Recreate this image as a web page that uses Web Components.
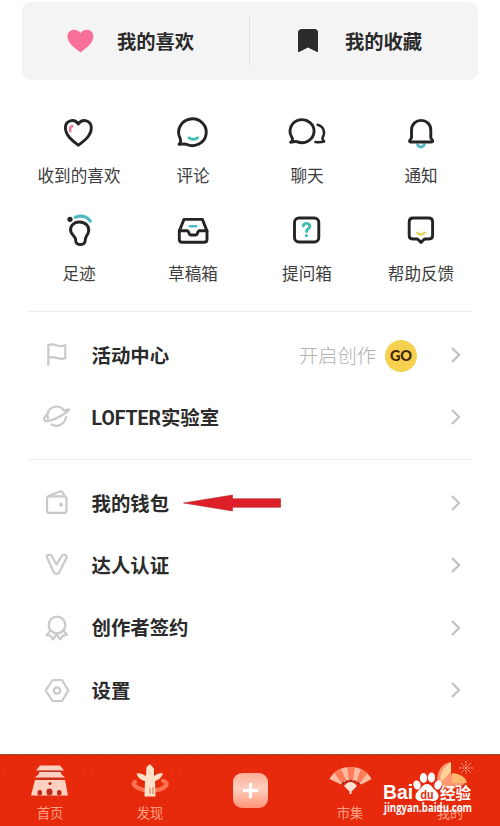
<!DOCTYPE html>
<html lang="zh-CN">
<head>
<meta charset="utf-8">
<title>LOFTER</title>
<style>
body{margin:0;background:#fff;width:500px;height:826px;overflow:hidden}
</style>
</head>
<body>
<profile-page></profile-page>
<script>
// Icon artwork; every entry is [viewBox, markup].
const ICONS = {
  like:['60 21 40 40','<path fill="#f8709a" d="M80.500 52.500C75 48 67.500 43.500 67.500 36.500C67.500 29.500 76 27.500 80.500 33C85 27.500 93.300 29.500 93.300 36.500C93.300 43.500 86 48 80.500 52.500Z"/>'],
  mark:['288 21 40 40','<path fill="#2b2b2b" d="M302 29H314.500Q318 29 318 32.500V51Q318 52.500 316.500 51.700L308 47.600L299.600 51.700Q298 52.500 298 51V33Q298 29 302 29Z"/>'],
  heart:['59 113 40 40','<path class="k" d="M78.300 145.200C73.500 141.500 65.400 136 65.400 127.800C65.400 120.500 74.200 117.800 78.300 124C82.500 117.800 91.300 120.500 91.300 127.800C91.300 136 83.500 141.500 78.300 145.200Z"/><path fill="none" stroke="#ee7d96" stroke-width="2.600" stroke-linecap="round" d="M70.300 131.300Q69.300 127.300 72.400 126"/>'],
  comment:['173 113 40 40','<path class="k" d="M179 144.200C181 142.800 181 140.500 180 138A13.800 13.400 0 1 1 186.500 144.300C184 143.400 181.500 144.600 179 144.200Z"/><path fill="none" stroke="#3fbcb6" stroke-width="2.800" stroke-linecap="round" d="M189 137.800Q193.300 140.700 197.500 137.800"/>'],
  chat:['287 113 40 40','<path class="k" d="M290.500 142.200C293 141 292.800 139 291.600 136.800A12 11.500 0 1 1 297.500 141.800C295 140.800 292.500 142.600 290.500 142.200Z"/><path class="k" style="stroke-width:2.500" d="M317.600 124.800C323.800 126.500 325.500 132.300 322.600 137.700Q322 139.800 324.200 141.500Q320.500 142.500 315.500 142"/>'],
  bell:['401 113 40 40','<path fill="none" stroke="#55b8c9" stroke-width="3" d="M417.500 143.500A3.400 3.400 0 0 0 424.300 143.500"/><path class="k" d="M411.500 138V130.500C411.500 117 430.800 117 430.800 130.500V138L432.600 140.500Q433 142 431 142H411Q409 142 409.700 140.500Z"/>'],
  foot:['59 211 40 40','<circle cx="70" cy="219.300" r="2.600" fill="#242424"/><path fill="none" stroke="#50bac0" stroke-width="3.200" stroke-linecap="round" d="M75.200 217.200Q85 213.700 90.300 221"/><path class="k" d="M79.500 222C86 222 89.600 227 88.600 231.500C87.800 235.500 85 236.500 85.200 240.500C85.400 246 75.300 246 75.700 240.500C75.900 236.500 71.800 235 70.800 231.500C69.500 226.500 73.500 222 79.500 222Z"/>'],
  inbox:['173 211 40 40','<path class="k" d="M184 219.400H202.400L207 231V239.500Q207 242.300 204 242.300H182.300Q179.300 242.300 179.300 239.500V231Z"/><path class="k" d="M179.300 230.700H187.500C189 230.700 188.500 235 191 235H195.500C198 235 197.500 230.700 199 230.700H207"/><path stroke="#55b8d0" stroke-width="2.600" stroke-linecap="round" d="M190 226.300H196"/>'],
  ask:['287 211 40 40','<rect class="k" x="294.500" y="218" width="24.300" height="24" rx="4.500"/><path fill="none" stroke="#3ebbb8" stroke-width="2.900" stroke-linecap="round" stroke-linejoin="round" d="M303.300 225.800C304 222.200 310 222.700 309.700 226.500C309.500 229 306.600 228.700 306.600 231.500"/><circle cx="306.500" cy="235.600" r="1.600" fill="#3ebbb8"/>'],
  help:['401 211 40 40','<path class="k" d="M413 218H428.700Q432.600 218 432.600 222V235.600Q432.600 239 429 239H424.500L421 242.400L417.500 239H412.600Q409.200 239 409.200 235.600V222Q409.200 218 413 218Z"/><path fill="none" stroke="#e5d05f" stroke-width="2.300" stroke-linecap="round" d="M417.300 232.600Q421 236.300 424.800 232.600"/>'],
  flag:['37 335 40 40','<path class="g" d="M48.300 365V345.300C54 341.800 58.500 348.500 65.300 345.300V358C58.500 361.200 54 354.500 48.300 358"/>'],
  planet:['37 397 40 40','<path class="g" d="M48 418.700C44.500 407.500 58 402.500 64.500 410.700M48.500 412.800C43 417.500 42.300 422.300 49.300 420.800C57.500 418.800 67 412.500 69 409.600C67.300 409.300 65.500 409.700 63.500 410.600M51.600 424.500C59.500 428.500 65.700 422 66 417"/>'],
  wallet:['37 482 40 40','<rect class="g" x="47" y="495.300" width="19.500" height="16.600" rx="2.500"/><path class="g" d="M48.500 495L60 490.500Q62 490 63 492L64.500 495"/><circle cx="61" cy="503.700" r="2" fill="#c9c9c9"/>'],
  vip:['37 545 40 40','<path class="g" d="M47 557.500C46 554.500 50.700 554 51.700 556L56.500 564.500L61.700 556C63 554 67.700 554.500 66.400 558L59.500 572C58.200 574.600 54.900 574.600 53.700 572Z"/>'],
  medal:['37 607 40 40','<circle class="g" cx="57" cy="624" r="8.300"/><path class="g" d="M49.800 630L46.700 634.500L50.500 634.500L52.800 638.300L56.500 633.500L60.300 638.300L63 634.500L67 634L64 630"/>'],
  gear:['37 669 40 40','<path class="g" d="M52.600 679H62L68.300 689.500L62 700H52.600L45.600 689.500Z" stroke-linejoin="round"/><circle class="g" cx="57" cy="689.500" r="3.200"/>'],
  gate:['25 761 50 36','<g fill="#ffd0bf"><path d="M40 764.500H60L64 769.500H36Z"/><path d="M39 771H61V773L65 776.500H35L39 773Z"/><path d="M35 779H65L68 794.500H31Z"/></g><path stroke="#b93422" stroke-width="1.200" d="M38 770.400H62M36 777.600H64"/><g fill="#bd2b1b"><rect x="37.500" y="789" width="4.500" height="5.500" rx="2"/><rect x="46.500" y="787.500" width="6" height="7" rx="3"/><rect x="57" y="789" width="4.500" height="5.500" rx="2"/><circle cx="50" cy="782.500" r="1.600"/></g>'],
  pillar:['125 761 50 36','<path fill="none" stroke="#ff7250" stroke-width="4.300" stroke-linecap="round" d="M135 781C130 785 143 790.500 152 789.500C165 788.500 171 782.500 163 780"/><g fill="#ffe0c9"><path d="M144.500 795.500L145 780Q138 778.500 136.500 772.500Q141 771.500 146 775L146.500 766L150 763L154 767.500L154 775Q158 771.500 163 772.500Q161 778.500 155 780L155.500 795.500Z"/></g><path stroke="#e8aa86" stroke-width="2" d="M150 787V793M153 786V793"/>'],
  fan:['325 761 50 36','<path fill="#ffbba0" d="M329.500 778Q336 766 350.500 766Q365 766 371.500 778L361.500 783.500Q350 775 341 783.500Z"/><path fill="#ff7c5a" d="M334 771.500L341 768L346 779L341.500 782ZM347 766H355L353 779H349ZM361 768L367.500 772L360 782L356.500 780Z"/><path fill="#ffe0d4" d="M344 785Q350.500 777 357 785L351.500 790.500V793H349.500V790.500Z"/><path fill="none" stroke="#9c291c" stroke-width="1.700" stroke-dasharray="2.800 1.200" d="M342 783Q350.500 776 359.500 783"/>'],
  mine:['425 758 50 39','<path fill="#ff9672" d="M437 782Q437 763 451 761V773L465 783L450 789Z"/><path fill="#ffd29a" d="M451 761Q438 770 441 781L451 771Z"/><path fill="#ffb86e" d="M452 772Q465 773 467 782H452Z"/><path stroke="#ffb39b" stroke-width="1" stroke-dasharray="2 1" d="M466 760V773M459 767H473M461 762L471 772M471 762L461 772"/>']
};
const FONT = 'Roboto,"Noto Sans CJK SC",sans-serif';
const define = (name, build) => customElements.define(name, class extends HTMLElement {
  connectedCallback(){
    if(this.shadowRoot) return;
    this.attachShadow({mode:'open'}).innerHTML = build(this);
  }
});

define('line-icon', el => {
  const [box, art] = ICONS[el.getAttribute('name')];
  const [, , w, h] = box.split(' ');
  return `<style>:host{display:block;flex:none;width:${w}px;height:${h}px}svg{display:block}
  .k{fill:none;stroke:#242424;stroke-width:2.900;stroke-linejoin:round;stroke-linecap:round}
  .g{fill:none;stroke:#c9c9c9;stroke-width:2.200;stroke-linejoin:round;stroke-linecap:round}</style>
  <svg width="${w}" height="${h}" viewBox="${box}">${art}</svg>`;
});

define('quick-card', () => `<style>:host{display:grid;grid-template-columns:227px 1px 228px;margin:2px 22px 0;height:78px;background:#f4f4f4;border-radius:9px;align-items:center}
  i{height:50px;background:#e2e2e2}</style><slot name="a"></slot><i></i><slot name="b"></slot>`);

define('quick-link', el => `<style>:host{display:flex;align-items:center;padding-left:38px;gap:17px;font:700 19.3px/28px ${FONT};color:#2b2b2b;white-space:nowrap}span{padding-top:4px}</style>
  <line-icon name="${el.getAttribute('icon')}"></line-icon><span><slot></slot></span>`);

define('feature-grid', () => `<style>:host{display:grid;grid-template-columns:repeat(4,114px);grid-auto-rows:98px;margin:33px 22px 0;height:198px}</style><slot></slot>`);

define('feature-item', el => `<style>:host{display:flex;flex-direction:column;align-items:center;gap:12px;font:400 16.600px/24px ${FONT};color:#3d3d3d;white-space:nowrap}</style>
  <line-icon name="${el.getAttribute('icon')}"></line-icon><span><slot></slot></span>`);

define('menu-group', () => `<style>:host{display:block;margin:0 28px;border-top:1px solid #ededed}</style><slot></slot>`);

define('menu-row', el => `<style>:host{display:flex;align-items:center;height:62.300px;padding:0 10px 0 9px;font:700 19.400px/28px ${FONT};color:#2b2b2b;white-space:nowrap}
  .t{margin-left:14.500px;padding-top:3px}.x{margin-left:13.500px}.end{margin-left:auto;display:flex;align-items:center;gap:33px}svg{display:block}</style>
  <line-icon name="${el.getAttribute('icon')}"></line-icon><span class="t"><slot></slot></span><span class="x"><slot name="after"></slot></span>
  <div class="end"><slot name="end"></slot><svg width="12" height="18" viewBox="0 0 12 18"><path d="M2 2L9 9L2 16" fill="none" stroke="#c3c3c3" stroke-width="2.300"/></svg></div>`);

define('create-hint', () => `<style>:host{display:flex;align-items:center;gap:9px;font:300 19.300px/28px ${FONT};color:#b0b0b0}span{padding-top:3px}
  b{width:32px;height:32px;margin-top:2px;border-radius:50%;background:#f6d150;color:#45280b;font:900 14.500px/32px Lato,sans-serif;text-align:center;letter-spacing:-.2px}</style><span><slot></slot></span><b>GO</b>`);

define('red-arrow', () => `<style>:host,svg{display:block}</style><svg width="98" height="18" viewBox="183 494 98 18"><path fill="#dc1f29" stroke="#b82a2f" stroke-width=".6" d="M183.500 503L232.500 495V498.700H280.700V507.300H232.500V511Z"/></svg>`);

define('tab-bar', () => `<style>:host{display:grid;grid-template-columns:repeat(5,100px);position:relative;height:72px;box-sizing:border-box;border-top:1px solid #9b4a27;color:#ffa186;
  background-color:#e62a0b;background-image:radial-gradient(circle,rgba(187,25,0,.28) .9px,transparent 1.300px),radial-gradient(circle,rgba(187,25,0,.28) .9px,transparent 1.300px);background-size:22px 18px;background-position:0 0,11px 9px}</style><slot></slot>`);

define('tab-item', el => `<style>:host{display:flex;flex-direction:column;align-items:center;justify-content:flex-end;height:69px;gap:6px;font:400 13.300px/20px ${FONT}}</style>
  <line-icon name="${el.getAttribute('icon')}"></line-icon><span><slot></slot></span>`);

define('add-button', () => `<style>:host{display:flex;justify-content:center;padding-top:18px}div{width:35px;height:35px;border-radius:9px;background:linear-gradient(#ffaf96,#ffcebf 45%,#ff9478);display:grid;place-items:center}</style>
  <div><svg width="17" height="17"><path d="M8.500 1V16M1 8.500H16" stroke="#fff" stroke-width="3.200"/></svg></div>`);

// Source badge lying over the last two tabs.
define('site-badge', () => `<style>:host{position:absolute;left:380px;top:15px;width:96px;height:54px}svg{display:block;overflow:visible}text{fill:#fff;font-weight:700}</style>
  <svg width="96" height="54" viewBox="380 770 96 54">
  <text x="383" y="799.300" font-family="Liberation Sans,sans-serif" font-size="19.500" textLength="30" lengthAdjust="spacingAndGlyphs">Bai</text>
  <g fill="#fff"><ellipse cx="417" cy="785" rx="3.600" ry="4.700" transform="rotate(-18 417 785)"/><ellipse cx="423.500" cy="778" rx="3.600" ry="4.900"/><ellipse cx="431.500" cy="777.500" rx="3.600" ry="4.900"/><ellipse cx="438" cy="785" rx="3.600" ry="4.700" transform="rotate(18 438 785)"/>
  <path d="M427 784C431 784 432 787.500 435 790C441 794.500 439 801.500 432.500 801C429 800 425 800 421 801C414.500 801 413.500 794.500 419 790C422 787.500 423 784 427 784Z"/></g>
  <text x="420.500" y="798.500" font-family="Liberation Sans,sans-serif" font-size="12" textLength="13" lengthAdjust="spacingAndGlyphs" style="fill:#e52b0b">du</text>
  <text x="440" y="799" font-family="Noto Sans CJK SC,sans-serif" font-size="15.500" textLength="31" lengthAdjust="spacingAndGlyphs">经验</text>
  <text x="384" y="812" font-family="Open Sans,sans-serif" font-size="12" textLength="88" lengthAdjust="spacingAndGlyphs">jingyan.baidu.com</text></svg>`);

define('profile-page', () => `<style>:host{display:flex;flex-direction:column;width:500px;height:826px;overflow:hidden;background:#fff}
  .one{padding-top:12px;height:135px}.two{padding-top:12px}tab-bar{margin-top:auto}</style>
  <quick-card><quick-link slot="a" icon="like">我的喜欢</quick-link><quick-link slot="b" icon="mark">我的收藏</quick-link></quick-card>
  <feature-grid>
  <feature-item icon="heart">收到的喜欢</feature-item><feature-item icon="comment">评论</feature-item><feature-item icon="chat">聊天</feature-item><feature-item icon="bell">通知</feature-item>
  <feature-item icon="foot">足迹</feature-item><feature-item icon="inbox">草稿箱</feature-item><feature-item icon="ask">提问箱</feature-item><feature-item icon="help">帮助反馈</feature-item>
  </feature-grid>
  <menu-group class="one"><menu-row icon="flag">活动中心<create-hint slot="end">开启创作</create-hint></menu-row><menu-row icon="planet">LOFTER实验室</menu-row></menu-group>
  <menu-group class="two"><menu-row icon="wallet">我的钱包<red-arrow slot="after"></red-arrow></menu-row><menu-row icon="vip">达人认证</menu-row><menu-row icon="medal">创作者签约</menu-row><menu-row icon="gear">设置</menu-row></menu-group>
  <tab-bar><tab-item icon="gate">首页</tab-item><tab-item icon="pillar">发现</tab-item><add-button></add-button><tab-item icon="fan">市集</tab-item><tab-item icon="mine">我的</tab-item><site-badge></site-badge></tab-bar>`);
</script>
</body>
</html>
